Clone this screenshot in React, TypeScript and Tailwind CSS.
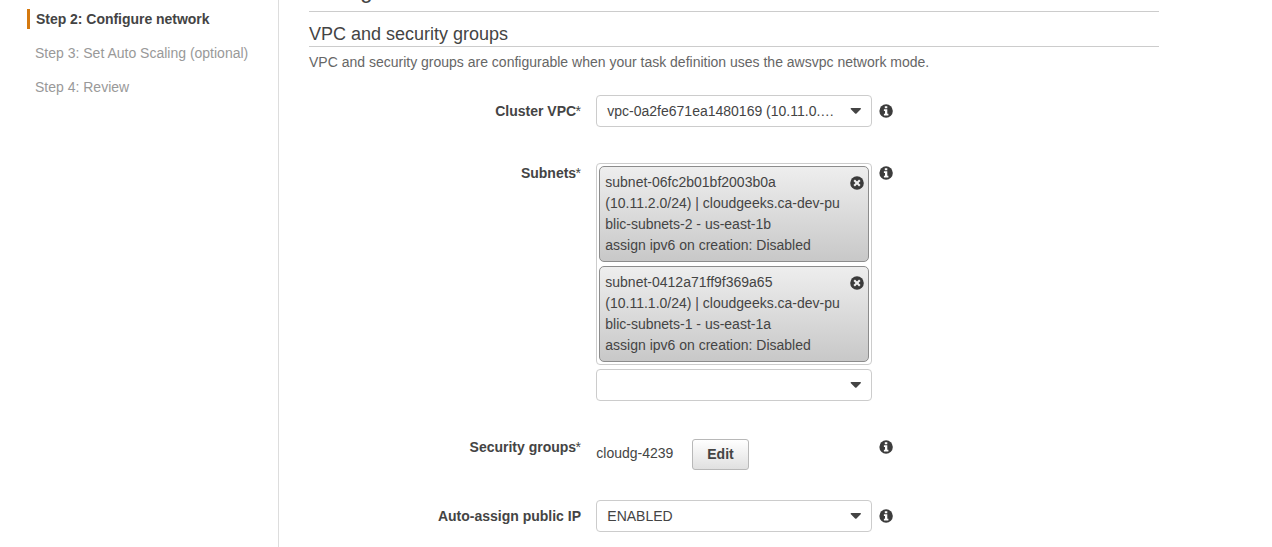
import type { ReactNode } from "react";

function InfoIcon({ className }: { className: string }) {
  return (
    <svg viewBox="0 0 14 14" className={className}>
      <circle cx="7.1" cy="7" r="6.7" fill="#3c3c3c" />
      <path d="M5.800 2.200h2.500v2H5.800zM4.900 5.200h3.400v4.500h1.100v1.800H4.900V9.700h1.100V6.900H4.900z" fill="#fff" />
    </svg>
  );
}

function RemoveIcon() {
  return (
    <svg viewBox="0 0 14 14" className="mt-1 size-[14px] shrink-0">
      <circle cx="7" cy="7" r="6.800" fill="#3a3a3a" />
      <path d="M4.200 4.200l5.600 5.600M9.800 4.200l-5.600 5.600" stroke="#eee" strokeWidth="2.100" />
    </svg>
  );
}

function Caret() {
  return (
    <svg width="11" height="6" viewBox="0 0 11 6" className="shrink-0 fill-[#444]">
      <path d="M.6.8C.6.300.900.100 1.300.100h8.900c.5 0 .8.300.8.700 0 .2-.1.400-.3.500L6.500 5.600q-.7.500-1.400 0L.9 1.300A.7.7 0 0 1 .6.800z" />
    </svg>
  );
}

function Select({ value }: { value?: string }) {
  return (
    <div className="flex h-8 w-[276px] items-center justify-between rounded border border-[#ccc] bg-white pr-[10px] pl-[10.3px]">
      <span className="whitespace-pre">{value}</span>
      <Caret />
    </div>
  );
}

function Token({ lines }: { lines: string[] }) {
  return (
    <div className="flex h-24 justify-between rounded-[5px] border border-[#8c8c8c] bg-linear-to-b from-[#eee] to-[#c8c8c8] pt-[5px] pr-1 pl-[5.3px] leading-[21px]">
      <div>
        {lines.map((line) => (
          <div key={line} className="whitespace-nowrap">{line}</div>
        ))}
      </div>
      <RemoveIcon />
    </div>
  );
}

function Field({ label, required, className, labelClass, children }: {
  label: string;
  required?: boolean;
  className: string;
  labelClass: string;
  children: ReactNode;
}) {
  return (
    <div className={`flex items-start ${className}`}>
      <div className={`mr-[15px] w-[272px] text-right leading-5 ${labelClass}`}>
        <span className="font-bold">{label}</span>
        {required && <span className="-ml-[0.6px]">*</span>}
      </div>
      <div className="w-[276px]">{children}</div>
      <InfoIcon className={`ml-[7px] box-content size-[14px] shrink-0 pt-[3px] ${labelClass}`} />
    </div>
  );
}

export default function App() {
  return (
    <div className="flex h-[547px] w-[1272px] overflow-hidden bg-white font-['Liberation_Sans',Arial,sans-serif] text-[14px] leading-5 text-[#444]">
      <nav className="w-[279px] shrink-0 border-r border-[#ddd] pt-[9px] pl-[27px] text-[#999]">
        <div className="mb-[14px] flex h-5 border-l-[3px] border-[#d5790f] pl-[6px] font-bold tracking-[-0.03px] text-[#444]">
          Step 2: Configure network
        </div>
        <div className="mb-[14px] pl-2">Step 3: Set Auto Scaling (optional)</div>
        <div className="pl-2">Step 4: Review</div>
      </nav>
      <main className="ml-[30px] w-[850px]">
        <h1 className="-mt-[22px] h-[34px] border-b border-[#ccc] text-[22px] leading-[25px]">Configure network</h1>
        <h2 className="h-[35px] border-b border-[#ccc] pt-[10px] text-[18px] leading-6">VPC and security groups</h2>
        <p className="mt-[5px] text-[#666]">
          VPC and security groups are configurable when your task definition uses the awsvpc network mode.
        </p>
        <Field label="Cluster VPC" required className="mt-[23px]" labelClass="mt-[6px]">
          <Select value="vpc-0a2fe671ea1480169 (10.11.0.…" />
        </Field>
        <Field label="Subnets" required className="mt-9" labelClass="">
          <div className="flex flex-col gap-1 rounded border border-[#ccc] p-[2px]">
            <Token
              lines={[
                "subnet-06fc2b01bf2003b0a",
                "(10.11.2.0/24) | cloudgeeks.ca-dev-pu",
                "blic-subnets-2 - us-east-1b",
                "assign ipv6 on creation: Disabled",
              ]}
            />
            <Token
              lines={[
                "subnet-0412a71ff9f369a65",
                "(10.11.1.0/24) | cloudgeeks.ca-dev-pu",
                "blic-subnets-1 - us-east-1a",
                "assign ipv6 on creation: Disabled",
              ]}
            />
          </div>
          <div className="mt-1">
            <Select />
          </div>
        </Field>
        <Field label="Security groups" required className="mt-9 h-[63px]" labelClass="">
          <div className="flex items-start pt-[2px]">
            <span className="w-24 pt-1 pl-[0.3px]">cloudg-4239</span>
            <button className="flex h-[31px] w-[57px] items-center justify-center rounded-[3px] border border-[#b8b8b8] bg-linear-to-b from-white to-[#e0e0e0] pb-px font-bold">
              Edit
            </button>
          </div>
        </Field>
        <Field label="Auto-assign public IP" className="" labelClass="mt-[6px]">
          <Select value="ENABLED" />
        </Field>
      </main>
    </div>
  );
}
